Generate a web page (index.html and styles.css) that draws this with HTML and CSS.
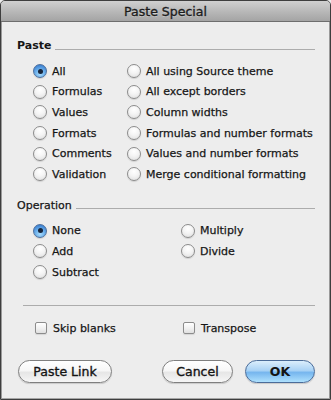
FILE: index.html
```html
<!DOCTYPE html>
<html>
<head>
<meta charset="utf-8">
<link rel="stylesheet" href="styles.css">
</head>
<body>
<div class="window">
  <div class="titlebar">Paste Special</div>
  <div class="content">
    <div class="group-head"><span class="head-label bold">Paste</span><span class="rule"></span></div>
    <div class="grid paste-grid">
      <label class="opt"><span class="radio on"></span>All</label>
      <label class="opt"><span class="radio"></span>All using Source theme</label>
      <label class="opt"><span class="radio"></span>Formulas</label>
      <label class="opt"><span class="radio"></span>All except borders</label>
      <label class="opt"><span class="radio"></span>Values</label>
      <label class="opt"><span class="radio"></span>Column widths</label>
      <label class="opt"><span class="radio"></span>Formats</label>
      <label class="opt"><span class="radio"></span>Formulas and number formats</label>
      <label class="opt"><span class="radio"></span>Comments</label>
      <label class="opt"><span class="radio"></span>Values and number formats</label>
      <label class="opt"><span class="radio"></span>Validation</label>
      <label class="opt"><span class="radio"></span>Merge conditional formatting</label>
    </div>
    <div class="group-head op-head"><span class="head-label">Operation</span><span class="rule"></span></div>
    <div class="grid op-grid">
      <label class="opt"><span class="radio on"></span>None</label>
      <label class="opt"><span class="radio"></span>Multiply</label>
      <label class="opt"><span class="radio"></span>Add</label>
      <label class="opt"><span class="radio"></span>Divide</label>
      <label class="opt"><span class="radio"></span>Subtract</label>
    </div>
    <div class="separator"></div>
    <div class="checks">
      <label class="chk chk-skip"><span class="box"></span>Skip blanks</label>
      <label class="chk"><span class="box"></span>Transpose</label>
    </div>
    <div class="buttons">
      <span class="btn btn-link">Paste Link</span>
      <span class="spacer"></span>
      <span class="btn btn-cancel">Cancel</span>
      <span class="btn btn-ok">OK</span>
    </div>
  </div>
</div>
</body>
</html>
```

FILE: styles.css
```css
* { box-sizing: border-box; }
html, body { margin: 0; padding: 0; }
body {
  width: 331px;
  height: 400px;
  background: #ededed;
  font-family: "DejaVu Sans", "Liberation Sans", sans-serif;
  font-size: 11px;
  color: #161616;
  overflow: hidden;
  -webkit-text-stroke: 0.25px #161616;
}
.window {
  width: 331px;
  height: 400px;
  border: 1px solid #3e3e3e;
  border-radius: 5px 5px 0 0;
  box-shadow: inset 1px 0 0 #9a9a9a, inset -1px 0 0 #9a9a9a, inset 0 -1px 0 #a6a6a6;
  background: #ededed;
  overflow: hidden;
}
.titlebar {
  height: 21px;
  background: linear-gradient(#d0d0d0, #b9b9b9 50%, #a4a4a4);
  border-bottom: 1px solid #6e6e6e;
  text-align: center;
  font-size: 12.5px;
  line-height: 21px;
  color: #1c1c1c;
  -webkit-text-stroke: 0.35px #1c1c1c;
  text-shadow: 0 1px 0 rgba(255,255,255,0.35);
}
.content {
  padding: 17px 15px 0 16px;
}
.group-head {
  display: flex;
  align-items: center;
  height: 14px;
  line-height: 14px;
}
.head-label { white-space: nowrap; }
.bold { font-weight: bold; -webkit-text-stroke: 0; }
.rule {
  flex: 1;
  height: 1px;
  background: #acacac;
  margin-left: 4px;
  margin-top: 6px;
}
.grid {
  display: grid;
  grid-auto-rows: 20.6px;
  margin-left: 16px;
  margin-top: 8px;
}
.paste-grid { grid-template-columns: 94px 1fr; }
.op-grid { grid-template-columns: 148px 1fr; }
.op-head { margin-top: 14px; }
.opt {
  display: flex;
  align-items: center;
  gap: 5px;
  white-space: nowrap;
}
.radio {
  width: 14px;
  height: 14px;
  border-radius: 50%;
  border: 1px solid #8c8c8c;
  background: radial-gradient(circle at 50% 30%, #ffffff 0%, #f4f4f4 45%, #dcdcdc 100%);
  box-shadow: 0 1px 1px rgba(0,0,0,0.12);
  flex: none;
  display: flex;
  align-items: center;
  justify-content: center;
}
.radio.on {
  border-color: #4d6f9c;
  background: radial-gradient(circle at 50% 75%, #a8dcfd 0%, #6aaeea 45%, #3f84d4 80%, #5b8fd0 100%);
}
.radio.on::after {
  content: "";
  width: 5px;
  height: 5px;
  border-radius: 50%;
  background: #16243a;
}
.separator {
  height: 1px;
  background: #acacac;
  margin: 23px 0 0 6px;
}
.checks {
  display: flex;
  height: 16px;
  margin-top: 14px;
  margin-left: 18px;
}
.chk {
  display: flex;
  align-items: center;
  gap: 6px;
  white-space: nowrap;
}
.chk-skip { width: 148px; }
.box {
  width: 12px;
  height: 12px;
  border: 1px solid #8c8c8c;
  border-radius: 2px;
  background: linear-gradient(#ffffff, #f2f2f2 50%, #e0e0e0);
  box-shadow: 0 1px 1px rgba(0,0,0,0.1);
  flex: none;
}
.buttons {
  display: flex;
  margin-top: 24px;
  gap: 12px;
}
.spacer { flex: 1; }
.btn {
  height: 23px;
  border-radius: 12px;
  border: 1px solid #7f7f7f;
  background: linear-gradient(#ffffff, #f7f7f7 45%, #e6e6e6 55%, #f6f6f6);
  box-shadow: 0 1px 1px rgba(0,0,0,0.15);
  display: flex;
  align-items: center;
  justify-content: center;
  font-size: 12.5px;
  color: #141414;
  -webkit-text-stroke: 0.35px #141414;
  white-space: nowrap;
}
.btn-link { width: 94px; margin-left: 1px; }
.btn-cancel { width: 71px; }
.btn-ok {
  width: 70px;
  border-color: #4b6c99;
  background: linear-gradient(#dbeefc, #a9d2f5 45%, #76b6ee 55%, #aee0fd);
  font-weight: bold;
  -webkit-text-stroke: 0;
}
```
